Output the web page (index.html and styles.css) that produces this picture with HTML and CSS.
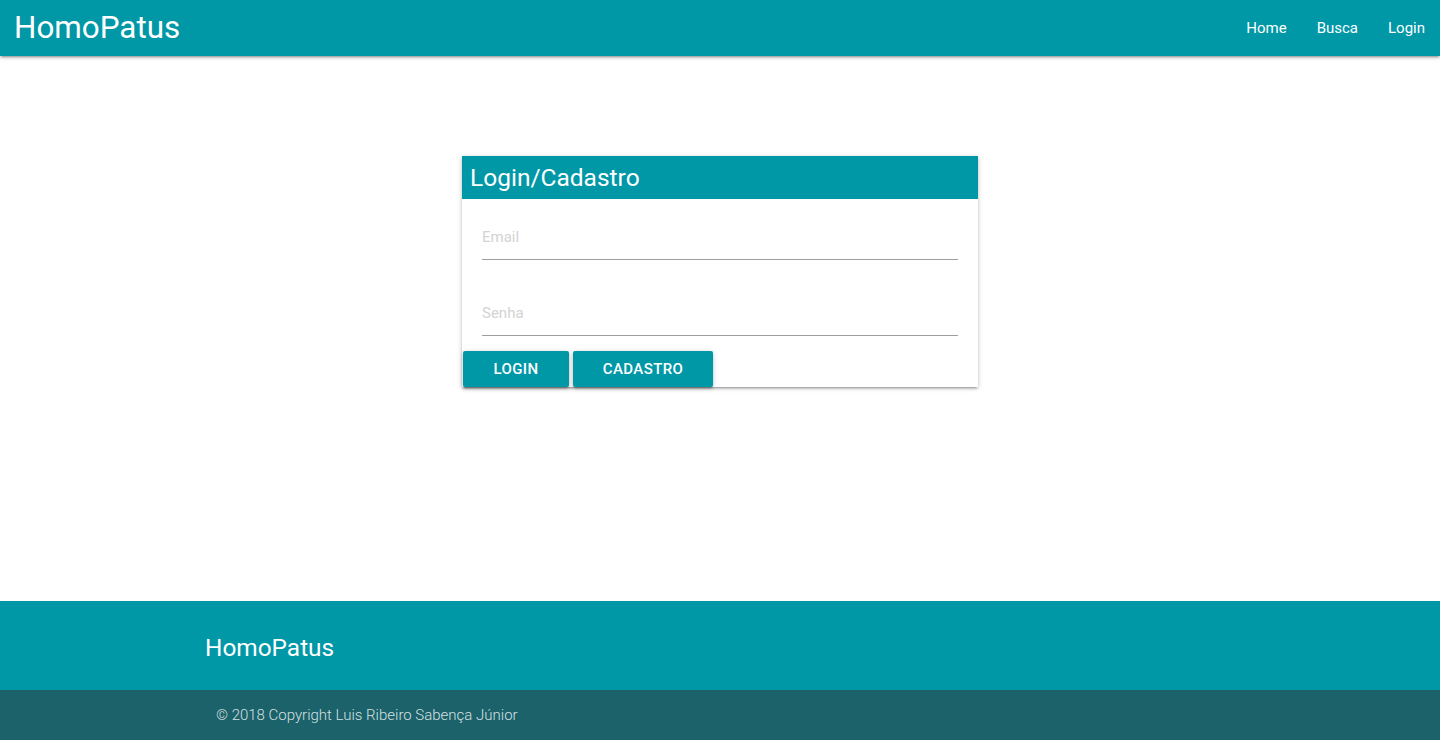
FILE: index.html
```html
<!DOCTYPE html>
<html lang="pt">
<head>
<meta charset="utf-8">
<title>HomoPatus</title>
<link rel="stylesheet" href="styles.css">
</head>
<body>
<nav class="navbar">
  <a class="brand" href="#">HomoPatus</a>
  <ul class="nav-links">
    <li><a href="#">Home</a></li>
    <li><a href="#">Busca</a></li>
    <li><a href="#">Login</a></li>
  </ul>
</nav>
<main class="main">
  <div class="card">
    <div class="card-header">Login/Cadastro</div>
    <form class="card-form">
      <div class="field field-first"><input type="email" placeholder="Email"></div>
      <div class="field"><input type="password" placeholder="Senha"></div>
      <div class="actions">
        <button type="button" class="btn btn-login">LOGIN</button>
        <button type="button" class="btn btn-cadastro">CADASTRO</button>
      </div>
    </form>
  </div>
</main>
<footer class="footer">
  <div class="footer-top">
    <h5 class="footer-title">HomoPatus</h5>
  </div>
  <div class="footer-copy">
    <div class="footer-copy-inner">© 2018 Copyright Luis Ribeiro Sabença Júnior</div>
  </div>
</footer>
</body>
</html>
```
FILE: styles.css
```css
* { box-sizing: border-box; }
html, body { margin: 0; padding: 0; }
body {
  font-family: Roboto, "Liberation Sans", sans-serif;
  min-height: 100vh;
  display: flex;
  flex-direction: column;
  background: #fff;
  color: rgba(0,0,0,0.87);
}
.navbar {
  height: 56px;
  background: #0097a7;
  display: flex;
  align-items: center;
  justify-content: space-between;
  box-shadow: 0 2px 2px 0 rgba(0,0,0,.14), 0 3px 1px -2px rgba(0,0,0,.12), 0 1px 5px 0 rgba(0,0,0,.2);
  position: relative;
  z-index: 2;
}
.brand {
  color: #fff;
  text-decoration: none;
  font-size: 31.4px;
  padding-left: 14px;
  line-height: 56px;
}
.nav-links {
  list-style: none;
  margin: 0;
  padding: 0;
  display: flex;
}
.nav-links a {
  display: block;
  color: #fff;
  text-decoration: none;
  font-size: 15px;
  padding: 0 15px;
  line-height: 56px;
}
.main {
  flex: 1;
  padding-top: 100px;
}
.card {
  width: 516px;
  margin: 0 auto;
  background: #fff;
  box-shadow: 0 2px 2px 0 rgba(0,0,0,.14), 0 3px 1px -2px rgba(0,0,0,.12), 0 1px 5px 0 rgba(0,0,0,.2);
}
.card-header {
  background: #0097a7;
  color: #fff;
  height: 43px;
  line-height: 44px;
  font-size: 24.5px;
  padding: 0 8px;
}
.card-form { margin: 0; }
.field {
  margin: 31px 20px 0;
}
.field-first { margin-top: 16px; }
.field input {
  display: block;
  width: 100%;
  height: 45px;
  border: none;
  border-bottom: 1px solid #9e9e9e;
  outline: none;
  background: transparent;
  font-family: Roboto, "Liberation Sans", sans-serif;
  font-size: 15px;
  padding: 0;
  color: rgba(0,0,0,0.87);
}
.field input::placeholder { color: #d3d3d3; }
.actions {
  margin-top: 15px;
  display: flex;
  gap: 4px;
  padding-left: 1px;
}
.btn {
  height: 36px;
  border: none;
  border-radius: 2px;
  background: #0097a7;
  color: #fff;
  font-family: Roboto, "Liberation Sans", sans-serif;
  font-size: 15px;
  font-weight: 500;
  letter-spacing: .4px;
  padding: 0;
  text-align: center;
  box-shadow: 0 2px 2px 0 rgba(0,0,0,.14), 0 3px 1px -2px rgba(0,0,0,.12), 0 1px 5px 0 rgba(0,0,0,.2);
  cursor: pointer;
}
.btn-login { width: 106px; }
.btn-cadastro { width: 140px; }
.footer { background: #0097a7; }
.footer-top {
  height: 89px;
  width: 1030px;
  margin: 0 auto;
  display: flex;
  align-items: center;
  padding-top: 3px;
}
.footer-title {
  margin: 0;
  color: #fff;
  font-size: 24.4px;
  font-weight: 400;
}
.footer-copy {
  background: #1b626b;
  height: 50px;
}
.footer-copy-inner {
  width: 1008px;
  margin: 0 auto;
  height: 50px;
  display: flex;
  align-items: center;
  color: rgba(255,255,255,0.82);
  font-size: 15px;
  font-weight: 300;
}
```
